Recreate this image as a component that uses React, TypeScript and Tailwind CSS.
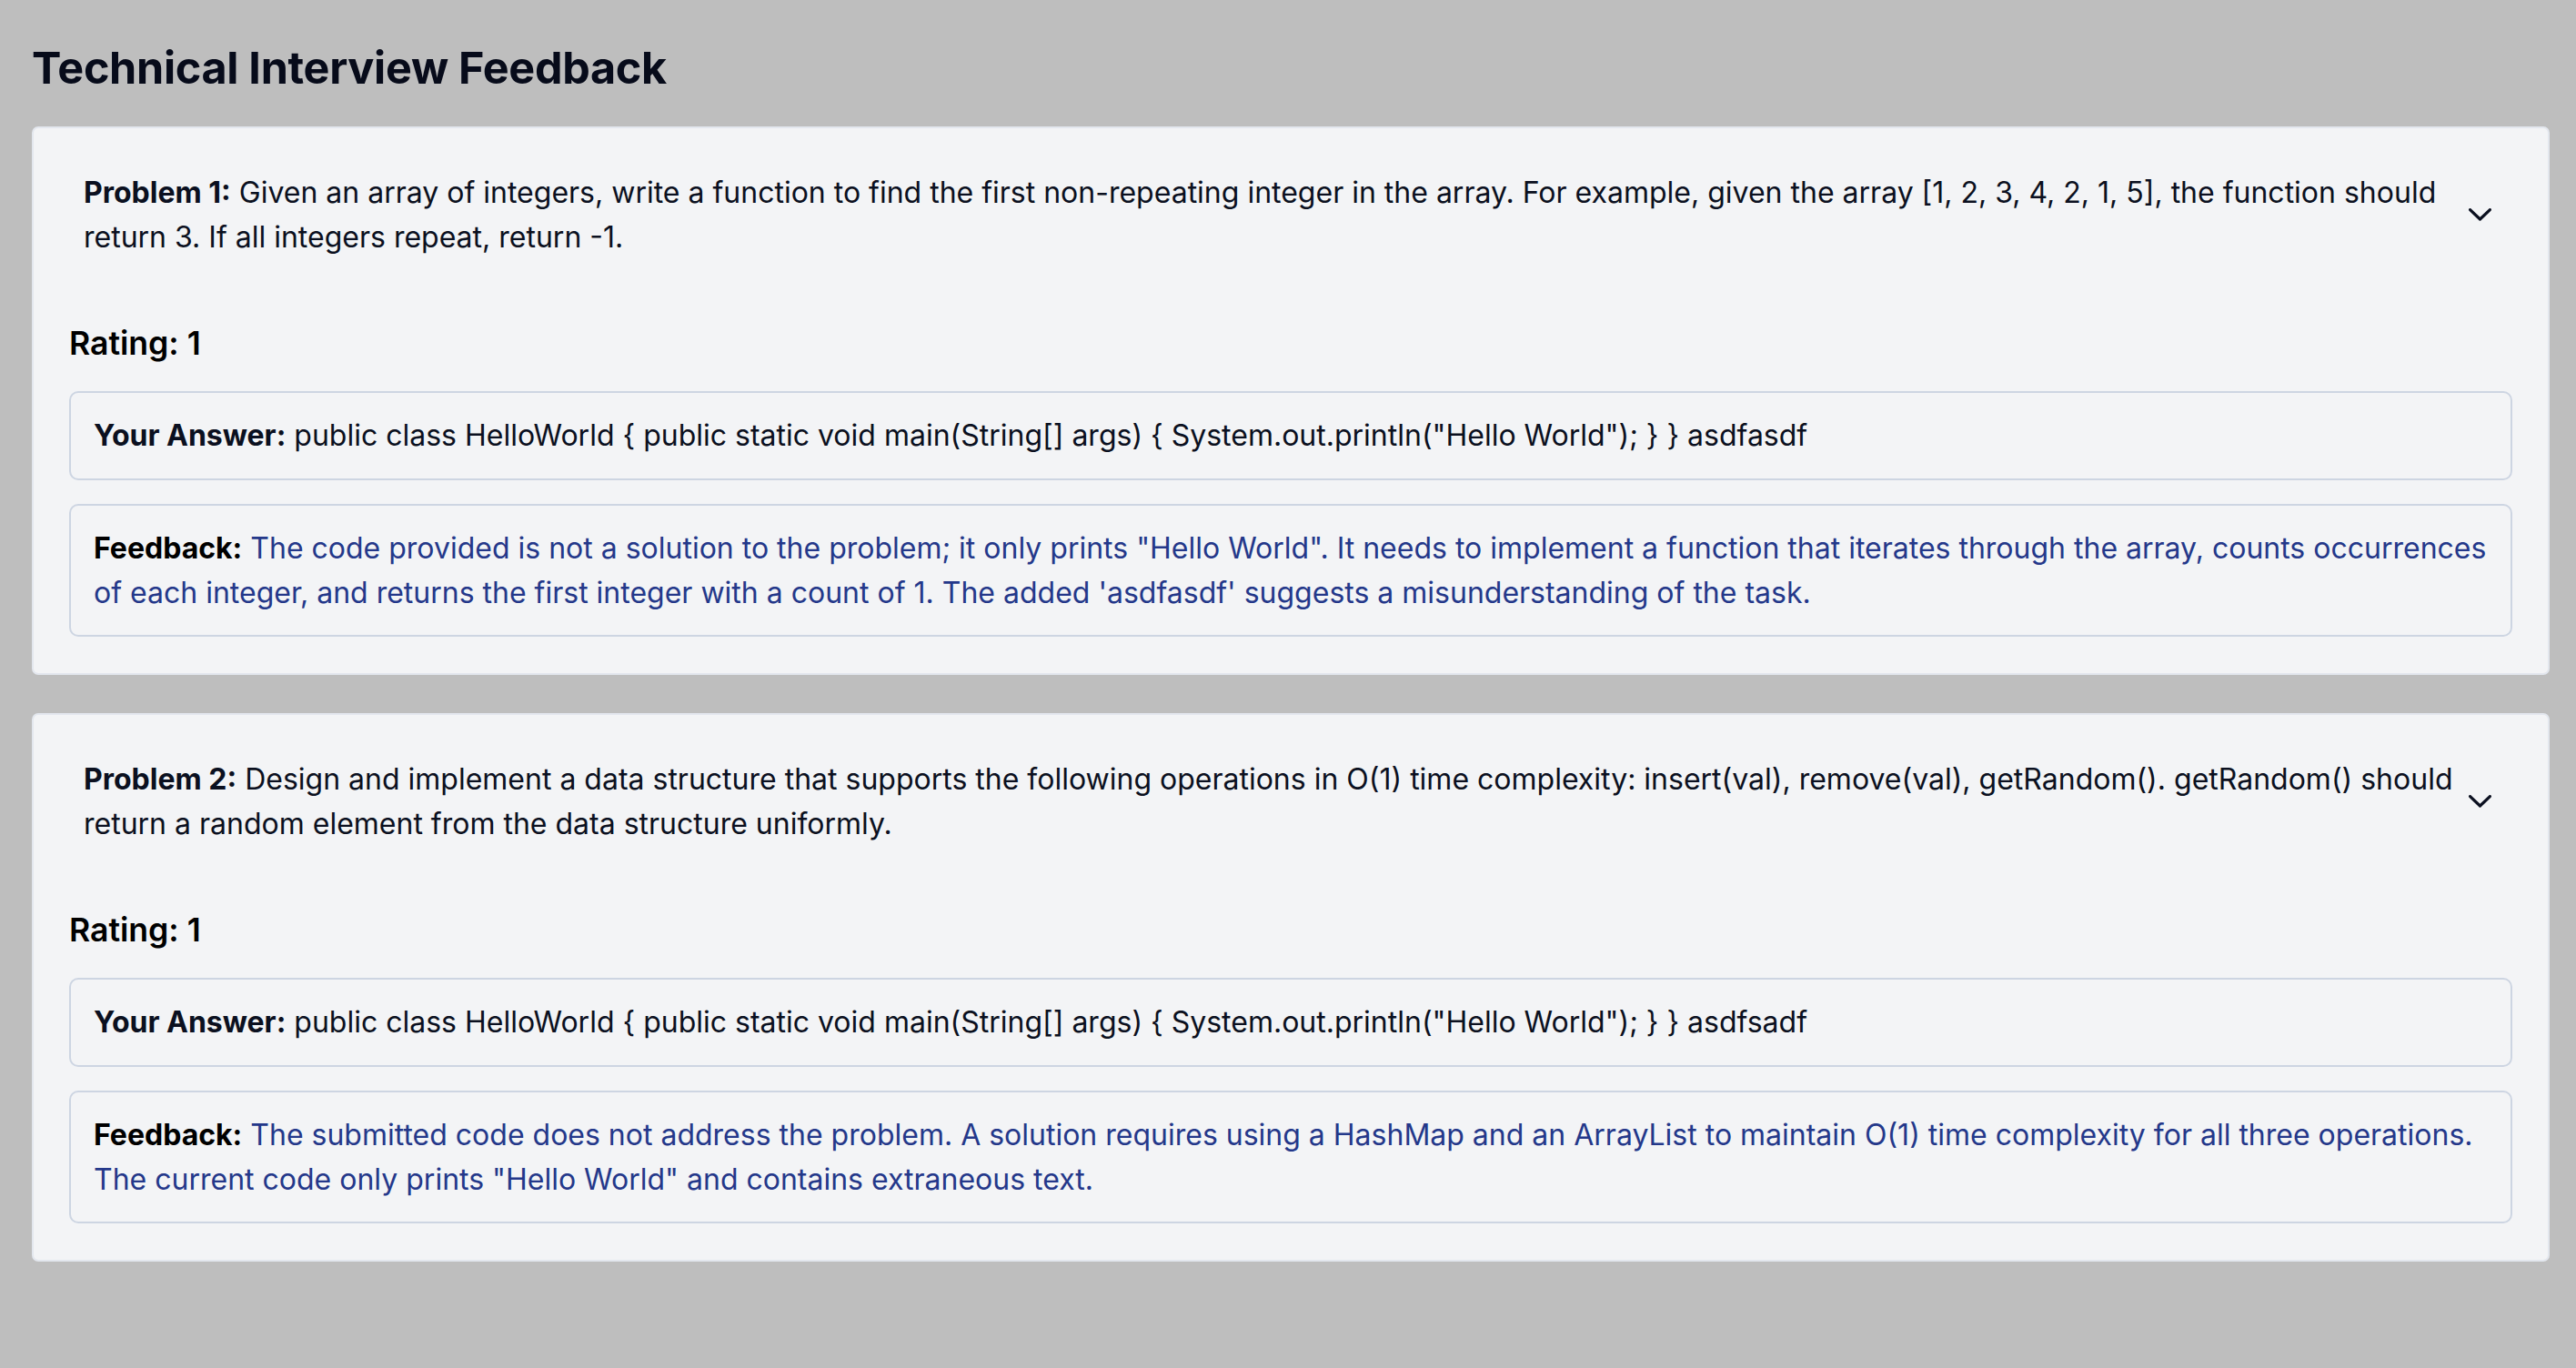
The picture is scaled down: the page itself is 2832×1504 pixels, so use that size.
import React from "react";

type Item = {
  n: number;
  problem: string;
  rating: number;
  answer: string;
  feedback: string;
};

const items: Item[] = [
  {
    n: 1,
    problem:
      "Given an array of integers, write a function to find the first non-repeating integer in the array. For example, given the array [1, 2, 3, 4, 2, 1, 5], the function should return 3. If all integers repeat, return -1.",
    rating: 1,
    answer:
      'public class HelloWorld { public static void main(String[] args) { System.out.println("Hello World"); } } asdfasdf',
    feedback:
      "The code provided is not a solution to the problem; it only prints \"Hello World\". It needs to implement a function that iterates through the array, counts occurrences of each integer, and returns the first integer with a count of 1. The added 'asdfasdf' suggests a misunderstanding of the task.",
  },
  {
    n: 2,
    problem:
      "Design and implement a data structure that supports the following operations in O(1) time complexity: insert(val), remove(val), getRandom(). getRandom() should return a random element from the data structure uniformly.",
    rating: 1,
    answer:
      'public class HelloWorld { public static void main(String[] args) { System.out.println("Hello World"); } } asdfsadf',
    feedback:
      'The submitted code does not address the problem. A solution requires using a HashMap and an ArrayList to maintain O(1) time complexity for all three operations. The current code only prints "Hello World" and contains extraneous text.',
  },
];

function Chevron() {
  return (
    <svg width="25" height="14" viewBox="0 0 25 14" fill="none" className="block">
      <polyline
        points="1.6,1.6 12.5,12 23.4,1.6"
        stroke="#0b1020"
        strokeWidth="3.2"
        strokeLinecap="round"
        strokeLinejoin="round"
      />
    </svg>
  );
}

function Card({ item }: { item: Item }) {
  return (
    <div className="rounded-[7px] border-2 border-[#e3e7ee] bg-[#f3f4f6] pl-[39px] pr-[39px] pt-[39px] pb-[40px]">
      <div className="flex items-center pl-[16px] pr-[23px] py-[7px]">
        <div className="flex-1 text-[32px] leading-[49px] text-[#0b1020]">
          <span className="font-bold">Problem {item.n}:</span> {item.problem}
        </div>
        <div className="ml-[11px]">
          <Chevron />
        </div>
      </div>
      <div className="mt-[61px] text-[35.6px] leading-[49px] font-semibold text-black">
        Rating: {item.rating}
      </div>
      <div className="mt-[28px] rounded-[10px] border-2 border-[#cdd5e2] px-[25px] pt-[22px] pb-[23px] text-[32px] leading-[49px] text-[#0b1020]">
        <span className="font-bold">Your Answer:</span> {item.answer}
      </div>
      <div className="mt-[26px] rounded-[10px] border-2 border-[#cdd5e2] px-[25px] py-[22px] text-[32px] leading-[49px]">
        <span className="font-bold text-black">Feedback:</span>{" "}
        <span className="text-[#24388a]">{item.feedback}</span>
      </div>
    </div>
  );
}

export default function App() {
  return (
    <div
      className="min-h-[1504px] w-full bg-[#bebebe] pl-[35px] pr-[29px] pt-[45px] pb-[40px]"
      style={{ fontFamily: "Inter, 'Noto Sans', sans-serif" }}
    >
      <h1 className="text-[48.5px] leading-[59px] font-bold tracking-[-0.3px] text-[#070b1a]">
        Technical Interview Feedback
      </h1>
      <div className="mt-[35px] flex flex-col gap-[42px]">
        {items.map((it) => (
          <Card key={it.n} item={it} />
        ))}
      </div>
    </div>
  );
}
